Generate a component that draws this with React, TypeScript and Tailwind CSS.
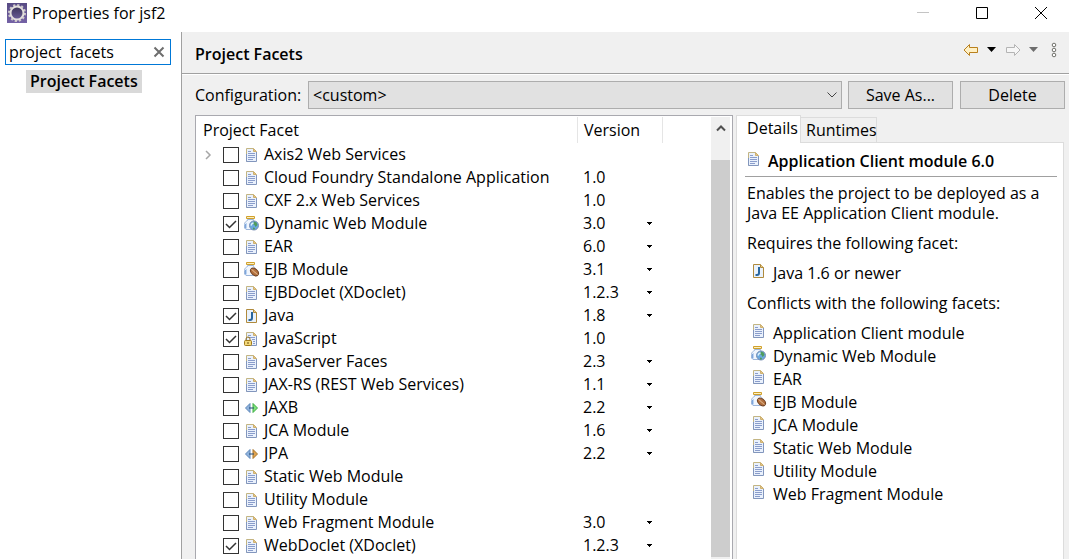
import { useState } from "react";

type IconKind = "doc" | "web" | "ejb" | "java" | "script" | "jaxb" | "jpa";

type Facet = {
  name: string;
  version?: string;
  icon: IconKind;
  checked?: boolean;
  menu?: boolean;
  expandable?: boolean;
};

const facets: Facet[] = [
  { name: "Axis2 Web Services", icon: "doc", expandable: true },
  { name: "Cloud Foundry Standalone Application", version: "1.0", icon: "doc" },
  { name: "CXF 2.x Web Services", version: "1.0", icon: "doc" },
  { name: "Dynamic Web Module", version: "3.0", icon: "web", checked: true, menu: true },
  { name: "EAR", version: "6.0", icon: "doc", menu: true },
  { name: "EJB Module", version: "3.1", icon: "ejb", menu: true },
  { name: "EJBDoclet (XDoclet)", version: "1.2.3", icon: "doc", menu: true },
  { name: "Java", version: "1.8", icon: "java", checked: true, menu: true },
  { name: "JavaScript", version: "1.0", icon: "script", checked: true },
  { name: "JavaServer Faces", version: "2.3", icon: "doc", menu: true },
  { name: "JAX-RS (REST Web Services)", version: "1.1", icon: "doc", menu: true },
  { name: "JAXB", version: "2.2", icon: "jaxb", menu: true },
  { name: "JCA Module", version: "1.6", icon: "doc", menu: true },
  { name: "JPA", version: "2.2", icon: "jpa", menu: true },
  { name: "Static Web Module", icon: "doc" },
  { name: "Utility Module", icon: "doc" },
  { name: "Web Fragment Module", version: "3.0", icon: "doc", menu: true },
  { name: "WebDoclet (XDoclet)", version: "1.2.3", icon: "doc", checked: true, menu: true },
];

const conflicts: { name: string; icon: IconKind }[] = [
  { name: "Application Client module", icon: "doc" },
  { name: "Dynamic Web Module", icon: "web" },
  { name: "EAR", icon: "doc" },
  { name: "EJB Module", icon: "ejb" },
  { name: "JCA Module", icon: "doc" },
  { name: "Static Web Module", icon: "doc" },
  { name: "Utility Module", icon: "doc" },
  { name: "Web Fragment Module", icon: "doc" },
];

function Page() {
  return (
    <>
      <path d="M2.500 1.500h7l3 3v10h-10z" fill="#eaf1fc" />
      <path d="M2.500 14.500v-13h7" fill="none" stroke="#c3b583" />
      <path d="M2.500 7v7.500h10V5" fill="none" stroke="#8296bd" />
      <path d="M9.500 1.500v3h3z" fill="#e5c685" stroke="#cdb070" />
    </>
  );
}

function Jar() {
  return (
    <>
      <path
        d="M3.500 3.500v1C2.500 5 .5 6 .5 8.500v3.500L2 13.500h9l1-1.500V8.500C12 6 10 5 9.500 4.500v-1z"
        fill="#f1f6fd"
        stroke="#9db6da"
      />
      <path d="M1.500 8v4.500" stroke="#7ea6dc" fill="none" />
      <path d="M2.500 7v5.500" stroke="#bcd4f2" fill="none" />
      <path d="M2.500.5h8v2h-8z" fill="#fdf0bd" stroke="#d0a02c" />
    </>
  );
}

function FacetIcon({ kind }: { kind: IconKind }) {
  return (
    <svg viewBox="0 0 16 16" className="size-4 shrink-0" aria-hidden="true">
      {kind === "doc" && (
        <>
          <Page />
          <path d="M4 4.500h3M4 6.500h7M4 8.500h7M4 10.500h7M4 12.500h5" stroke="#8a9dcb" />
        </>
      )}
      {kind === "script" && (
        <>
          <Page />
          <path d="M4 4.500h3M4 6.500h7M8 8.500h3M9 10.500h2M9 12.500h2" stroke="#8a9dcb" />
          <path d="M2 10V8a2 2 0 0 1 4 0v2" fill="none" stroke="#9b7622" />
          <rect x=".5" y="9.500" width="7" height="5" rx="1" fill="#f3d878" stroke="#a27b1c" />
          <path d="M4 11v2" stroke="#6c4f10" />
        </>
      )}
      {kind === "java" && (
        <>
          <path d="M2.500 1.500h7l3 3v10h-10z" fill="#e9f2fc" stroke="#b08a3c" />
          <path d="M9.500 1.500v3h3" fill="#e9ce8d" stroke="#b08a3c" />
          <path d="M8 4v6q0 2-2 2H4.500" fill="none" stroke="#28669f" strokeWidth="2" />
        </>
      )}
      {kind === "web" && (
        <>
          <Jar />
          <circle cx="10" cy="9.500" r="4.500" fill="#6aa9de" stroke="#7a8fb5" />
          <path d="M10 5.500l2.500 1 1 2.500-2 2-1-2-1.500-1zM9 11.500l2 .5-.5 1.500H9z" fill="#4f9c5c" />
          <path d="M7 9.500l1-2 1.500-.5" stroke="#dff2fa" strokeWidth="1.500" fill="none" />
        </>
      )}
      {kind === "ejb" && (
        <>
          <Jar />
          <ellipse
            cx="10.500"
            cy="10"
            rx="4.500"
            ry="3"
            transform="rotate(40 10.500 10)"
            fill="#b3713f"
            stroke="#704021"
          />
          <path d="M7.500 7.500c2 .5 1.500 2 3 2.500s1.500 2 3 2.500" fill="none" stroke="#edc69c" />
        </>
      )}
      {(kind === "jaxb" || kind === "jpa") && (
        <>
          <path d="M1.500 8L6 3.500v9z" fill="#8fb2dc" stroke="#5f88bb" />
          {kind === "jaxb" ? (
            <path d="M13.500 8L9 3.500v9z" fill="#7fe07a" stroke="#3fae45" />
          ) : (
            <path d="M13.500 8L9 3.500v9z" fill="#dfa24e" stroke="#a8752a" />
          )}
          <path d="M5 8h5" stroke="#234a75" />
        </>
      )}
    </svg>
  );
}

function GearLogo() {
  return (
    <svg viewBox="0 0 20 20" className="size-5 shrink-0" aria-hidden="true">
      <defs>
        <linearGradient id="gear-bg" x2="0" y2="1">
          <stop offset="0" stopColor="#574b83" />
          <stop offset="1" stopColor="#7462a6" />
        </linearGradient>
        <linearGradient id="gear-hole" x2="0" y2="1">
          <stop offset="0" stopColor="#3a3358" />
          <stop offset="1" stopColor="#6b5e98" />
        </linearGradient>
      </defs>
      <rect width="20" height="20" fill="url(#gear-bg)" />
      <circle cx="10" cy="10" r="8" fill="none" stroke="#cfcaca" strokeWidth="2" strokeDasharray="2.200 1.990" />
      <circle cx="10" cy="10" r="6.500" fill="url(#gear-hole)" stroke="#e2dfdc" strokeWidth="2" />
    </svg>
  );
}

function FacetRow({ facet }: { facet: Facet }) {
  const [checked, setChecked] = useState(Boolean(facet.checked));

  return (
    <tr className="h-[23px]">
      <td className="p-0">
        <div className="flex h-[23px] items-center pl-2">
          <span className="flex w-[19px] shrink-0">
            {facet.expandable && (
              <button type="button" aria-label={`Expand ${facet.name}`}>
                <svg viewBox="0 0 8 10" className="h-[10px] w-2" fill="none" stroke="#a6a6a6" strokeWidth="1.500">
                  <path d="M2 1l4 4-4 4" />
                </svg>
              </button>
            )}
          </span>
          <label className="flex items-center whitespace-nowrap">
            <span className="relative mr-[5px] flex size-4 shrink-0">
              <input
                type="checkbox"
                checked={checked}
                onChange={(e) => setChecked(e.target.checked)}
                className="size-4 appearance-none border border-[#333333] bg-white"
              />
              {checked && (
                <svg
                  viewBox="0 0 16 16"
                  className="pointer-events-none absolute inset-0 size-4"
                  fill="none"
                  stroke="#333333"
                  strokeWidth="1.500"
                >
                  <path d="M3 8l3.500 3.500L13 5" />
                </svg>
              )}
            </span>
            <FacetIcon kind={facet.icon} />
            <span className="ml-1 pb-px">{facet.name}</span>
          </label>
        </div>
      </td>
      <td className="p-0 pb-px pl-[5px]">{facet.version}</td>
      <td className="p-0">
        {facet.menu && (
          <button type="button" aria-label={`Change version of ${facet.name}`} className="flex h-[22px] items-center">
            <svg viewBox="0 0 5 3" className="h-[3px] w-[5px]" shapeRendering="crispEdges">
              <path d="M0 0h5v1H4v1H3v1H2V2H1V1H0z" />
            </svg>
          </button>
        )}
      </td>
      <td className="p-0" />
    </tr>
  );
}

function TitleBar() {
  return (
    <header className="flex h-8 items-start bg-white pl-[7px] pr-[21px] pt-[3px]">
      <GearLogo />
      <h1 className="ml-[5px] flex-1 leading-5">Properties for jsf2</h1>
      <div className="flex h-5 items-center gap-[45px]">
        <button type="button" aria-label="Minimize" disabled>
          <svg viewBox="0 0 14 14" className="size-[14px]" stroke="#c4c4c4">
            <path d="M1 6.500h12" />
          </svg>
        </button>
        <button type="button" aria-label="Maximize">
          <svg viewBox="0 0 14 14" className="size-[14px]" fill="none" stroke="#000">
            <path d="M1.500 1.500h11v11h-11z" />
          </svg>
        </button>
        <button type="button" aria-label="Close">
          <svg viewBox="0 0 14 14" className="size-[14px]" stroke="#000">
            <path d="M1 1l12 12M13 1L1 13" />
          </svg>
        </button>
      </div>
    </header>
  );
}

function Sidebar() {
  const [query, setQuery] = useState("project  facets");

  return (
    <aside className="w-[181px] shrink-0 bg-white pl-[5px] pr-[10px] pt-[7px]">
      <div className="flex h-[26px] items-center border border-[#0078d7] pr-[5px]">
        <input
          type="text"
          aria-label="Filter"
          value={query}
          onChange={(e) => setQuery(e.target.value)}
          className="w-full min-w-0 flex-1 pl-[3px] outline-none"
        />
        <button type="button" aria-label="Clear" onClick={() => setQuery("")}>
          <svg viewBox="0 0 12 12" className="size-3" stroke="#6e6e6e" strokeWidth="2">
            <path d="M1.500 1.500l9 9M10.500 1.500l-9 9" />
          </svg>
        </button>
      </div>
      <a
        href="#facets"
        className="ml-[21px] mt-[5px] inline-block h-[23px] whitespace-nowrap bg-[#d9d9d9] px-1 font-semibold leading-[22px]"
      >
        Project Facets
      </a>
    </aside>
  );
}

function HeaderTools() {
  return (
    <div className="flex items-center pb-[6px]">
      <button type="button" aria-label="Back">
        <svg viewBox="0 0 16 14" className="h-[14px] w-4" fill="#fff0c4" stroke="#b9801d">
          <path d="M1 7l5.500-5.500v3h8v5h-8v3z" />
        </svg>
      </button>
      <button type="button" aria-label="Back history" className="ml-2">
        <svg viewBox="0 0 9 5" className="h-[5px] w-[9px]">
          <path d="M0 0h9L4.500 5z" />
        </svg>
      </button>
      <button type="button" aria-label="Forward" className="ml-[9px]">
        <svg viewBox="0 0 16 14" className="h-[14px] w-4" fill="#f6f6f6" stroke="#b4b4b4">
          <path d="M15 7L9.500 1.500v3h-8v5h8v3z" />
        </svg>
      </button>
      <button type="button" aria-label="Forward history" className="ml-2">
        <svg viewBox="0 0 9 5" className="h-[5px] w-[9px]" fill="#6d6d6d">
          <path d="M0 0h9L4.500 5z" />
        </svg>
      </button>
      <button type="button" aria-label="View menu" className="ml-[13px]">
        <svg viewBox="0 0 6 16" className="h-4 w-[6px]" fill="#fff" stroke="#70706a">
          <circle cx="3" cy="3" r="1.800" />
          <circle cx="3" cy="8" r="1.800" />
          <circle cx="3" cy="13" r="1.800" />
        </svg>
      </button>
    </div>
  );
}

function FacetTable() {
  return (
    <div className="flex min-w-0 border border-b-0 border-[#a9a9af] bg-white pr-[2px] pt-px">
      <table
        id="facets"
        className="w-full min-w-0 flex-1 table-fixed border-separate border-spacing-0 self-start text-left"
      >
        <colgroup>
          <col className="w-[382px]" />
          <col className="w-[69px]" />
          <col className="w-4" />
          <col />
        </colgroup>
        <thead>
          <tr className="h-[26px]">
            <th scope="col" className="border-r border-[#e5e5e5] p-0 pl-[7px] font-normal">
              Project Facet
            </th>
            <th scope="col" colSpan={2} className="border-r border-[#e5e5e5] p-0 pl-[6px] font-normal">
              Version
            </th>
            <td />
          </tr>
        </thead>
        <tbody>
          {facets.map((facet) => (
            <FacetRow key={facet.name} facet={facet} />
          ))}
        </tbody>
      </table>
      <div className="flex w-[19px] shrink-0 flex-col bg-[#f0f0f0] pb-[2px]">
        <button type="button" aria-label="Scroll up" className="flex h-[43px] justify-center pt-[7px]">
          <svg viewBox="0 0 10 8" className="h-2 w-[10px]" fill="none" stroke="#505050" strokeWidth="2">
            <path d="M1 6.500l4-4 4 4" />
          </svg>
        </button>
        <div className="flex-1 bg-[#cdcdcd]" />
      </div>
    </div>
  );
}

function DetailsPanel() {
  return (
    <div className="flex min-w-0 flex-col">
      <div role="tablist" className="flex h-[27px] items-end">
        <button
          type="button"
          role="tab"
          aria-selected="true"
          className="z-10 -mb-px h-7 w-[65px] border border-b-0 border-[#dcdcdc] bg-white pb-[3px] pl-2"
        >
          Details
        </button>
        <button
          type="button"
          role="tab"
          aria-selected="false"
          className="h-[25px] w-[76px] border border-b-0 border-l-0 border-[#dcdcdc] pl-[5px]"
        >
          Runtimes
        </button>
      </div>
      <section className="flex-1 border border-b-0 border-[#dcdcdc] bg-white pl-2 pr-[6px] pt-2">
        <h3 className="flex h-[26px] items-start border-b border-[#a0a0a0] pl-px font-semibold leading-[21px]">
          <FacetIcon kind="doc" />
          <span className="ml-[6px]">Application Client module 6.0</span>
        </h3>
        <div className="pl-[2px] pt-[6px] leading-5">
          <p>Enables the project to be deployed as a Java EE Application Client module.</p>
          <p className="mt-[10px]">Requires the following facet:</p>
          <div className="mt-[10px] flex gap-[6px] pl-1">
            <FacetIcon kind="java" />
            <span>Java 1.6 or newer</span>
          </div>
          <p className="mt-[10px]">Conflicts with the following facets:</p>
          <ul className="mt-[10px] flex flex-col gap-[3px]">
            {conflicts.map((item) => (
              <li key={item.name} className="flex gap-[6px] pl-1">
                <FacetIcon kind={item.icon} />
                <span>{item.name}</span>
              </li>
            ))}
          </ul>
        </div>
      </section>
    </div>
  );
}

export default function App() {
  return (
    <div className="flex min-h-screen flex-col bg-white font-['Open_Sans','Noto_Sans',sans-serif] text-[16px] leading-[22px] text-black">
      <TitleBar />
      <div className="flex flex-1">
        <Sidebar />
        <main className="flex min-w-0 flex-1 flex-col border-l border-[#a0a0a0] bg-[#f0f0f0]">
          <div className="flex h-[42px] items-center justify-between border-b border-[#a0a0a0] pl-[13px] pr-3">
            <h2 className="pt-[2px] font-semibold">Project Facets</h2>
            <HeaderTools />
          </div>
          <div className="flex flex-1 flex-col border-t border-white pl-[13px] pr-1 pt-[6px]">
            <div className="flex h-7 items-center">
              <label htmlFor="configuration" className="w-[113px] shrink-0">
                Configuration:
              </label>
              <div className="relative h-7 min-w-0 flex-1">
                <select
                  id="configuration"
                  className="h-7 w-full appearance-none border border-[#adadad] bg-[#e1e1e1] pl-1"
                >
                  <option>&lt;custom&gt;</option>
                </select>
                <svg
                  viewBox="0 0 10 6"
                  className="pointer-events-none absolute right-[5px] top-[11px] h-[6px] w-[10px]"
                  fill="none"
                  stroke="#444"
                >
                  <path d="M.5.500L5 5 9.500.500" />
                </svg>
              </div>
              <button type="button" className="ml-[6px] h-7 w-[105px] border border-[#adadad] bg-[#e1e1e1]">
                Save As...
              </button>
              <button type="button" className="ml-[7px] h-7 w-[105px] border border-[#adadad] bg-[#e1e1e1]">
                Delete
              </button>
            </div>
            <div className="mt-[6px] grid flex-1 grid-cols-[538fr_328fr] gap-[3px] pr-px">
              <FacetTable />
              <DetailsPanel />
            </div>
          </div>
        </main>
      </div>
    </div>
  );
}
